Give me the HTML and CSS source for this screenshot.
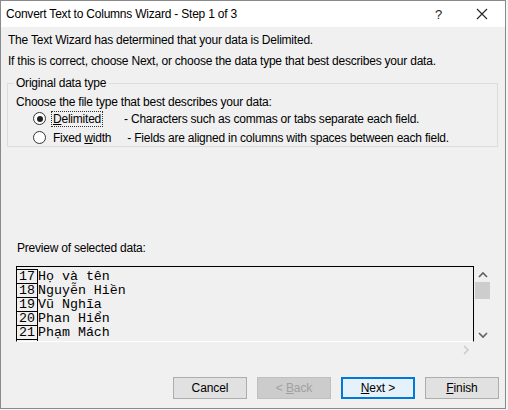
FILE: index.html
```html
<!DOCTYPE html>
<html>
<head>
<meta charset="utf-8">
<link rel="stylesheet" href="styles.css">
</head>
<body>
<div class="window">
  <div class="titlebar">
    <span class="title">Convert Text to Columns Wizard - Step 1 of 3</span>
    <span class="help">?</span>
    <span class="close"><svg width="12" height="12" viewBox="0 0 12 12"><path d="M1 1 L11 11 M11 1 L1 11" stroke="#222" stroke-width="1.1" fill="none"/></svg></span>
  </div>
  <div class="content">
    <p class="line1">The Text Wizard has determined that your data is Delimited.</p>
    <p class="line2">If this is correct, choose Next, or choose the data type that best describes your data.</p>
    <fieldset class="group">
      <legend>Original data type</legend>
      <p class="choose">Choose the file type that best describes your data:</p>
      <div class="opt">
        <span class="radio checked"></span>
        <span class="lbl focus"><u>D</u>elimited</span>
        <span class="desc d1">- Characters such as commas or tabs separate each field.</span>
      </div>
      <div class="opt">
        <span class="radio"></span>
        <span class="lbl">Fixed <u>w</u>idth</span>
        <span class="desc d2">- Fields are aligned in columns with spaces between each field.</span>
      </div>
    </fieldset>
    <p class="preview-label">Preview of selected data:</p>
    <div class="preview">
      <div class="box">
        <div class="rows">
          <div class="row"><span class="num">17</span><span class="val">Họ và tên</span></div>
          <div class="row"><span class="num">18</span><span class="val">Nguyễn Hiền</span></div>
          <div class="row"><span class="num">19</span><span class="val">Vũ Nghĩa</span></div>
          <div class="row"><span class="num">20</span><span class="val">Phan Hiển</span></div>
          <div class="row"><span class="num">21</span><span class="val">Phạm Mách</span></div>
          <div class="row"><span class="num"></span><span class="val"></span></div>
        </div>
      </div>
      <div class="vscroll">
        <svg class="arr" width="10" height="8" viewBox="0 0 10 8"><path d="M1 6 L5 2 L9 6" stroke="#606060" stroke-width="1.6" fill="none"/></svg>
        <div class="thumb"></div>
        <div class="spacer"></div>
        <svg class="arr" width="10" height="8" viewBox="0 0 10 8"><path d="M1 2 L5 6 L9 2" stroke="#606060" stroke-width="1.6" fill="none"/></svg>
      </div>
      <div class="hscroll">
        <svg width="8" height="10" viewBox="0 0 8 10"><path d="M2 1 L6 5 L2 9" stroke="#c8c8c8" stroke-width="1.4" fill="none"/></svg>
      </div>
    </div>
    <div class="buttons">
      <button class="btn">Cancel</button>
      <button class="btn disabled">&lt; <u>B</u>ack</button>
      <button class="btn default"><u>N</u>ext &gt;</button>
      <button class="btn"><u>F</u>inish</button>
    </div>
  </div>
</div>
</body>
</html>
```
FILE: styles.css
```css
html, body {
  margin: 0;
  padding: 0;
}
body {
  background: #f4f4f4;
  width: 508px;
  height: 410px;
  overflow: hidden;
  font-family: "Liberation Sans", Arial, sans-serif;
  font-size: 12px;
  letter-spacing: -0.22px;
  color: #000;
}
.window {
  width: 504px;
  height: 407px;
  border: 1px solid #8a8a8a;
  background: #f0f0f0;
  display: flex;
  flex-direction: column;
}
.titlebar {
  height: 26px;
  background: #fff;
  display: flex;
  align-items: center;
  padding-left: 5px;
}
.title {
  flex: 1;
  font-size: 12px;
  color: #000;
}
.help {
  width: 14px;
  margin-right: 27px;
  font-size: 13px;
  color: #222;
}
.close {
  width: 12px;
  margin-right: 17px;
  display: flex;
}
.content {
  flex: 1;
  padding: 0 6px 0 6px;
  display: flex;
  flex-direction: column;
}
p { margin: 0; }
.line1 {
  margin-top: 6px;
  margin-left: 1px;
  height: 14px;
  line-height: 14px;
}
.line2 {
  margin-top: 7px;
  margin-left: 1px;
  height: 14px;
  line-height: 14px;
}
.group {
  margin: 8px 0 0 0;
  padding: 0 0 6px 8px;
  border: 1px solid #dcdcdc;
  width: 491px;
  box-sizing: border-box;
  height: 71px;
}
.group legend {
  padding: 0 3px 0 2px;
  margin-left: -2px;
  line-height: 14px;
}
.choose {
  margin-top: 5px;
  line-height: 14px;
}
.opt {
  display: flex;
  align-items: center;
  height: 19px;
  margin-left: 17px;
}
.opt:first-of-type { margin-top: 0; }
.radio {
  width: 11px;
  height: 11px;
  border: 1px solid #333;
  border-radius: 50%;
  background: #fff;
  box-sizing: content-box;
  position: relative;
}
.radio.checked::after {
  content: "";
  position: absolute;
  left: 2.5px;
  top: 2.5px;
  width: 6px;
  height: 6px;
  border-radius: 50%;
  background: #222;
}
.lbl {
  margin-left: 5px;
  padding: 0 1px;
  line-height: 14px;
  border: 1px dotted transparent;
}
.lbl.focus { border-color: #333; }
.desc.d1 { margin-left: 21px; }
.desc.d2 { margin-left: 14px; }
.preview-label {
  margin-top: 94px;
  margin-left: 10px;
  line-height: 14px;
}
.preview {
  margin-top: 11px;
  margin-left: 9px;
  display: grid;
  grid-template-columns: 458px 17px;
  grid-template-rows: 76px 15px;
}
.box {
  border-top: 1px solid #000;
  border-left: 1px solid #000;
  border-right: 1px solid #000;
  border-bottom: 1px solid #fff;
  overflow: hidden;
  box-sizing: border-box;
}
.rows {
  padding-top: 2px;
  font-family: "Liberation Mono", "Courier New", monospace;
  font-size: 13.3px;
  letter-spacing: 0;
}
.row {
  display: flex;
  height: 14px;
  line-height: 14px;
}
.num {
  width: 21px;
  box-sizing: border-box;
  border-top: 1px solid #000;
  border-right: 1px solid #000;
  padding-left: 2px;
  line-height: 13px;
}
.val {
  padding-left: 0;
  line-height: 15px;
}
.vscroll {
  display: flex;
  flex-direction: column;
  align-items: center;
  padding-top: 5px;
}
.vscroll .arr { margin-left: 1px; }
.thumb {
  margin-top: 3px;
  width: 15px;
  height: 17px;
  background: #cdcdcd;
}
.spacer { flex: 1; }
.vscroll .arr:last-child { margin-bottom: 3px; }
.hscroll {
  display: flex;
  justify-content: flex-end;
  align-items: center;
  padding-right: 4px;
}
.buttons {
  margin-top: 20px;
  display: flex;
  justify-content: flex-end;
  gap: 10px;
  padding-right: 0;
}
.btn {
  width: 74px;
  height: 22px;
  box-sizing: border-box;
  background: #e1e1e1;
  border: 1px solid #adadad;
  font-family: "Liberation Sans", Arial, sans-serif;
  font-size: 12px;
  letter-spacing: -0.1px;
  color: #000;
  padding: 0;
  margin: 0;
}
.btn u { text-decoration: underline; }
.btn.disabled {
  background: #cccccc;
  border-color: #bfbfbf;
  color: #a0a0a0;
}
.btn.default {
  border: 2px solid #0078d7;
  background: #e5f1fb;
}
```
